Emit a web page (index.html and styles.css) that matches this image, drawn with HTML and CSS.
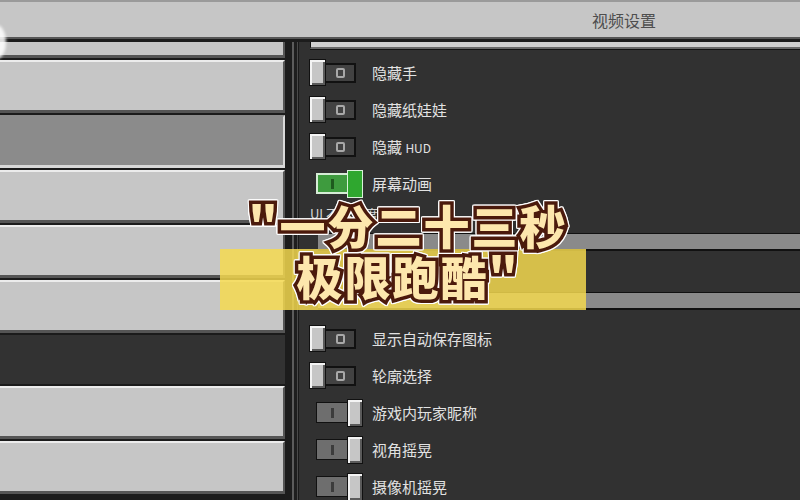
FILE: index.html
```html
<!DOCTYPE html>
<html lang="zh-CN">
<head>
    <meta charset="UTF-8">
    <meta name="viewport" content="width=device-width, initial-scale=1.0">
    <title>视频设置</title>
    <link rel="stylesheet" href="styles.css">
</head>
<body>
    <div class="screen">
        <header class="topbar">
            <span class="title">视频设置</span>
        </header>

        <div class="main">
            <div class="nav">
                <div class="btn partial"></div>
                <div class="btn"></div>
                <div class="btn selected"></div>
                <div class="btn"></div>
                <div class="btn"></div>
                <div class="btn"></div>
                <div class="nav-gap"></div>
                <div class="btn"></div>
                <div class="btn"></div>
            </div>

            <div class="divider"></div>

            <div class="panel">
                <div class="strip"></div>

                <div class="row">
                    <div class="toggle"><span class="knob"></span><span class="track"><i class="mark-o"></i></span></div>
                    <span class="label">隐藏手</span>
                </div>
                <div class="row">
                    <div class="toggle"><span class="knob"></span><span class="track"><i class="mark-o"></i></span></div>
                    <span class="label">隐藏纸娃娃</span>
                </div>
                <div class="row">
                    <div class="toggle"><span class="knob"></span><span class="track"><i class="mark-o"></i></span></div>
                    <span class="label">隐藏 <small>HUD</small></span>
                </div>
                <div class="row">
                    <div class="toggle on green"><span class="track"><i class="mark-i"></i></span><span class="knob"></span></div>
                    <span class="label">屏幕动画</span>
                </div>

                <div class="slider">
                    <span class="slider-label">UI 不透明度</span>
                    <div class="bar"></div>
                </div>
                <div class="slider">
                    <span class="slider-label"></span>
                    <div class="bar"></div>
                </div>

                <div class="row">
                    <div class="toggle"><span class="knob"></span><span class="track"><i class="mark-o"></i></span></div>
                    <span class="label">显示自动保存图标</span>
                </div>
                <div class="row">
                    <div class="toggle"><span class="knob"></span><span class="track"><i class="mark-o"></i></span></div>
                    <span class="label">轮廓选择</span>
                </div>
                <div class="row">
                    <div class="toggle on"><span class="track"><i class="mark-i"></i></span><span class="knob"></span></div>
                    <span class="label">游戏内玩家昵称</span>
                </div>
                <div class="row">
                    <div class="toggle on"><span class="track"><i class="mark-i"></i></span><span class="knob"></span></div>
                    <span class="label">视角摇晃</span>
                </div>
                <div class="row">
                    <div class="toggle on"><span class="track"><i class="mark-i"></i></span><span class="knob"></span></div>
                    <span class="label">摄像机摇晃</span>
                </div>
            </div>
        </div>

        <!-- video caption on top of the game screen -->
        <div class="band"></div>
        <div class="caption">
            <div>"一分二十三秒</div>
            <div>极限跑酷"</div>
        </div>
        <div class="notch"></div>
    </div>
</body>
</html>
```

FILE: styles.css
```css
body {
    margin: 0;
    background: #313131;
}

.screen {
    position: relative;
    width: 800px;
    height: 500px;
    overflow: hidden;
    font-family: "Noto Sans CJK SC", "Noto Sans", sans-serif;
}

.topbar {
    height: 35px;
    background: #c6c6c6;
    border-top: 2px solid #9a9a9a;
    border-bottom: 2px solid #565656;
    box-shadow: 0 3px 0 #1c1c1c;
    display: flex;
    align-items: center;
}

.title {
    margin-left: 592px;
    font-size: 16px;
    color: #4e4e4e;
}

.main {
    display: flex;
    margin-top: 3px;
    height: 458px;
}

/* left category list */
.nav {
    width: 285px;
    background: #1b1b1b;
    display: flex;
    flex-direction: column;
}

.btn {
    width: 283px;
    height: 48px;
    box-sizing: content-box;
    background: #c6c6c6;
    border-top: 2px solid #ececec;
    border-bottom: 3px solid #555;
    border-right: 2px solid #555;
    margin-bottom: 2px;
    flex-shrink: 0;
}

.btn.partial {
    height: 13px;
    border-top: none;
}

.btn.selected {
    background: #8b8b8b;
    border-top-color: #8b8b8b;
    border-bottom-color: #d8d8d8;
    border-right-color: #d8d8d8;
}

.nav-gap {
    width: 285px;
    height: 49px;
    background: #323232;
    margin-bottom: 2px;
    flex-shrink: 0;
}

.divider {
    width: 14px;
    background: linear-gradient(to right, #1c1c1c 0 7px, #5c5c5c 7px 9px, #1e1e1e 9px 12px, #4a4a4a 12px 13px, #1a1a1a 13px);
}

/* settings panel */
.panel {
    flex: 1;
    background: #313131;
    padding-left: 10px;
}

.strip {
    height: 5px;
    margin-left: 1px;
    background: #d0d0d0;
    border-left: 1px solid #111;
    border-bottom: 2px solid #6a6a6a;
    box-shadow: 0 1px 0 #111;
    margin-bottom: 5px;
}

.row {
    height: 37px;
    display: flex;
    align-items: center;
}

.toggle {
    width: 54px;
    margin-right: 9px;
    display: flex;
    align-items: center;
}

.knob {
    width: 17px;
    height: 27px;
    box-sizing: border-box;
    background: #c6c6c6;
    border: 1px solid #111;
    box-shadow: inset 2px 2px 0 #f4f4f4, inset -2px -2px 0 #5a5a5a;
}

.track {
    width: 30px;
    height: 20px;
    box-sizing: border-box;
    background: #424242;
    border: 2px solid #111;
    border-left: none;
    display: flex;
    align-items: center;
    justify-content: center;
}

.mark-o {
    width: 9px;
    height: 10px;
    box-sizing: border-box;
    border: 2px solid #a8a8a8;
    border-radius: 2px;
}

.toggle.on {
    padding-left: 7px;
    box-sizing: border-box;
}

.toggle.on .track {
    width: 31px;
    height: 21px;
    background: #6e6e6e;
    border: 1px solid #111;
    border-right: none;
}

.toggle.on .knob {
    width: 16px;
    height: 28px;
}

.mark-i {
    width: 3px;
    height: 10px;
    background: #3c3c3c;
}

.toggle.green .track {
    background: #3e9b3e;
    border-color: #d6ecd6;
    border-width: 2px;
}

.toggle.green .knob {
    background: #2fa72f;
    border-color: #d9f2d9;
    box-shadow: none;
}

.toggle.green .mark-i {
    background: #1e5a1e;
}

.label {
    font-size: 15px;
    color: #e2e2e2;
}

.label small {
    font-size: 12px;
}

.slider {
    height: 59px;
    display: flex;
    flex-direction: column;
}

.slider-label {
    height: 31px;
    line-height: 24px;
    font-size: 13px;
    color: #d6d6d6;
    padding-left: 1px;
}

.bar {
    height: 15px;
    margin-left: 9px;
    background: #8a8a8a;
    border-top: 1px solid #111;
    border-bottom: 2px solid #111;
}

/* overlay caption */
.band {
    position: absolute;
    left: 220px;
    top: 249px;
    width: 366px;
    height: 61px;
    background: rgba(245, 218, 79, 0.84);
}

.caption {
    position: absolute;
    left: 8px;
    top: 199px;
    width: 800px;
    text-align: center;
    font-size: 46px;
    font-weight: 900;
    line-height: 51px;
    letter-spacing: 2px;
    color: #fde7ad;
    -webkit-text-stroke: 7px #4b1a0c;
    paint-order: stroke fill;
    filter: drop-shadow(1px 0 0 #fff) drop-shadow(-1px 0 0 #fff) drop-shadow(0 1px 0 #fff) drop-shadow(0 -1px 0 #fff);
}

.notch {
    position: absolute;
    left: -13px;
    top: 25px;
    width: 19px;
    height: 34px;
    border-radius: 50%;
    background: rgba(255, 255, 255, 0.85);
    filter: blur(1.5px);
}
```
